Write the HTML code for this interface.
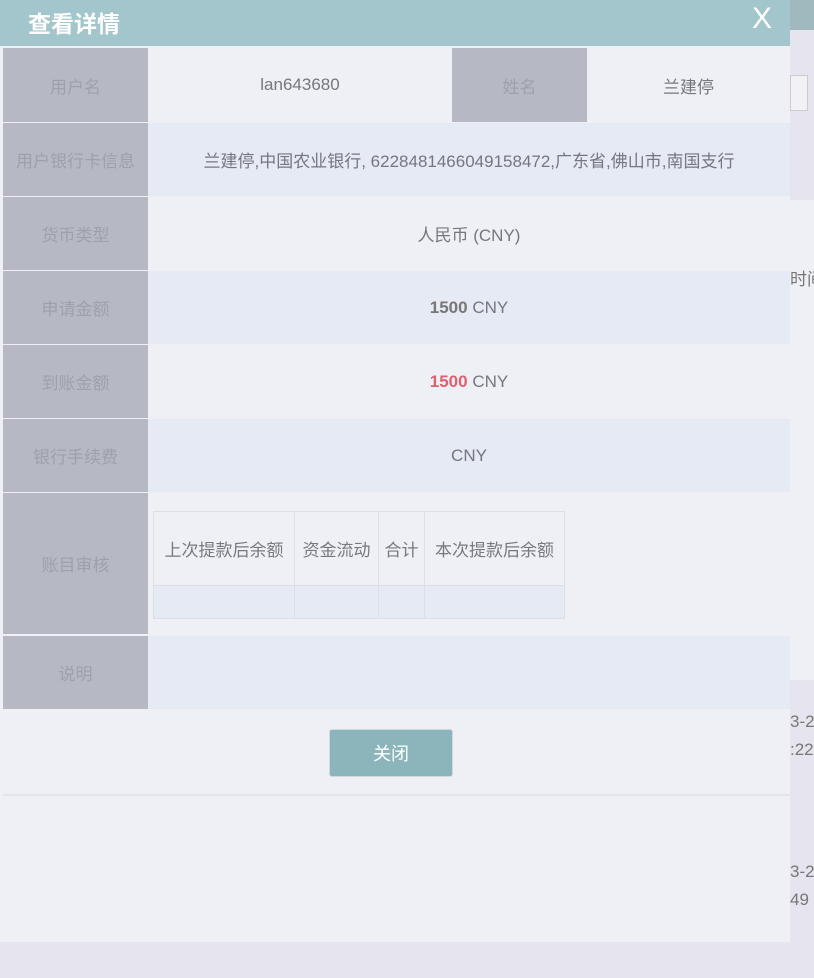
<!DOCTYPE html><html><head><meta charset="utf-8"><style>
body{margin:0;width:814px;height:978px;background:#e6e4ee;font-family:"Liberation Sans","Noto Sans CJK SC",sans-serif;position:relative;overflow:hidden}
div{position:absolute;box-sizing:border-box;white-space:nowrap}
.l{background:#b6b9c3;color:#9ea1ab;font-size:17px;display:flex;align-items:center;justify-content:center}
.v{color:#75777f;font-size:17px;display:flex;align-items:center;justify-content:center}
.a{background:#eff0f6}.b{background:#e6eaf5}
.c{border:1px solid #dcdee8;color:#77797f;font-size:17px;display:flex;align-items:center;justify-content:center}
.bg{color:#777;font-size:17px;left:790px}
</style></head><body>
<div style="left:790px;top:0;width:24px;height:30px;background:#9fb9bf"></div>
<div style="left:790px;top:75px;width:18px;height:36px;border:1px solid #ccc;background:#f2f2f6"></div>
<div style="left:790px;top:200px;width:24px;height:480px;background:#eef0f6"></div>
<div class="bg" style="top:265px">时间</div>
<div class="bg" style="top:712px">3-2</div>
<div class="bg" style="top:740px">:22</div>
<div class="bg" style="top:862px">3-2</div>
<div class="bg" style="top:890px">49</div>
<div style="left:0;top:0;width:790px;height:942px;background:#eff0f6"></div>
<div style="left:0;top:0;width:790px;height:46px;background:#a3c6cc;color:#fff;font-size:23px;font-weight:bold;padding:5px 0 0 28px">查看详情</div>
<div style="left:752px;top:2px;color:#fff;font-size:30px">X</div>
<div class="l" style="left:3px;top:48px;width:145px;height:74px">用户名</div>
<div class="v a" style="left:148px;top:48px;width:304px;height:74px">lan643680</div>
<div class="l" style="left:452px;top:48px;width:135px;height:74px">姓名</div>
<div class="v a" style="left:587px;top:48px;width:203px;height:74px">兰建停</div>
<div class="l" style="left:3px;top:123px;width:145px;height:73px">用户银行卡信息</div>
<div class="v b" style="left:148px;top:123px;width:642px;height:73px">兰建停,中国农业银行, 6228481466049158472,广东省,佛山市,南国支行</div>
<div class="l" style="left:3px;top:197px;width:145px;height:73px">货币类型</div>
<div class="v a" style="left:148px;top:197px;width:642px;height:73px">人民币 (CNY)</div>
<div class="l" style="left:3px;top:271px;width:145px;height:73px">申请金额</div>
<div class="v b" style="left:148px;top:271px;width:642px;height:73px"><b style="color:#777">1500</b>&nbsp;CNY</div>
<div class="l" style="left:3px;top:345px;width:145px;height:73px">到账金额</div>
<div class="v a" style="left:148px;top:345px;width:642px;height:73px"><b style="color:#e06070">1500</b>&nbsp;CNY</div>
<div class="l" style="left:3px;top:419px;width:145px;height:73px">银行手续费</div>
<div class="v b" style="left:148px;top:419px;width:642px;height:73px">CNY</div>
<div class="l" style="left:3px;top:493px;width:145px;height:141px">账目审核</div>
<div class="c" style="left:153px;top:511px;width:142px;height:75px">上次提款后余额</div>
<div class="c" style="left:294px;top:511px;width:85px;height:75px">资金流动</div>
<div class="c" style="left:378px;top:511px;width:47px;height:75px">合计</div>
<div class="c" style="left:424px;top:511px;width:141px;height:75px">本次提款后余额</div>
<div class="c b" style="left:153px;top:585px;width:142px;height:34px"></div>
<div class="c b" style="left:294px;top:585px;width:85px;height:34px"></div>
<div class="c b" style="left:378px;top:585px;width:47px;height:34px"></div>
<div class="c b" style="left:424px;top:585px;width:141px;height:34px"></div>
<div class="l" style="left:3px;top:636px;width:145px;height:73px">说明</div>
<div class="b" style="left:148px;top:636px;width:642px;height:73px"></div>
<div style="left:3px;top:794px;width:787px;height:2px;background:#e2e4ee"></div>
<div style="left:329px;top:729px;width:124px;height:48px;background:#8bb5ba;border:1px solid #d0d8e0;border-radius:3px;color:#fff;font-size:18px;display:flex;align-items:center;justify-content:center">关闭</div>
</body></html>
